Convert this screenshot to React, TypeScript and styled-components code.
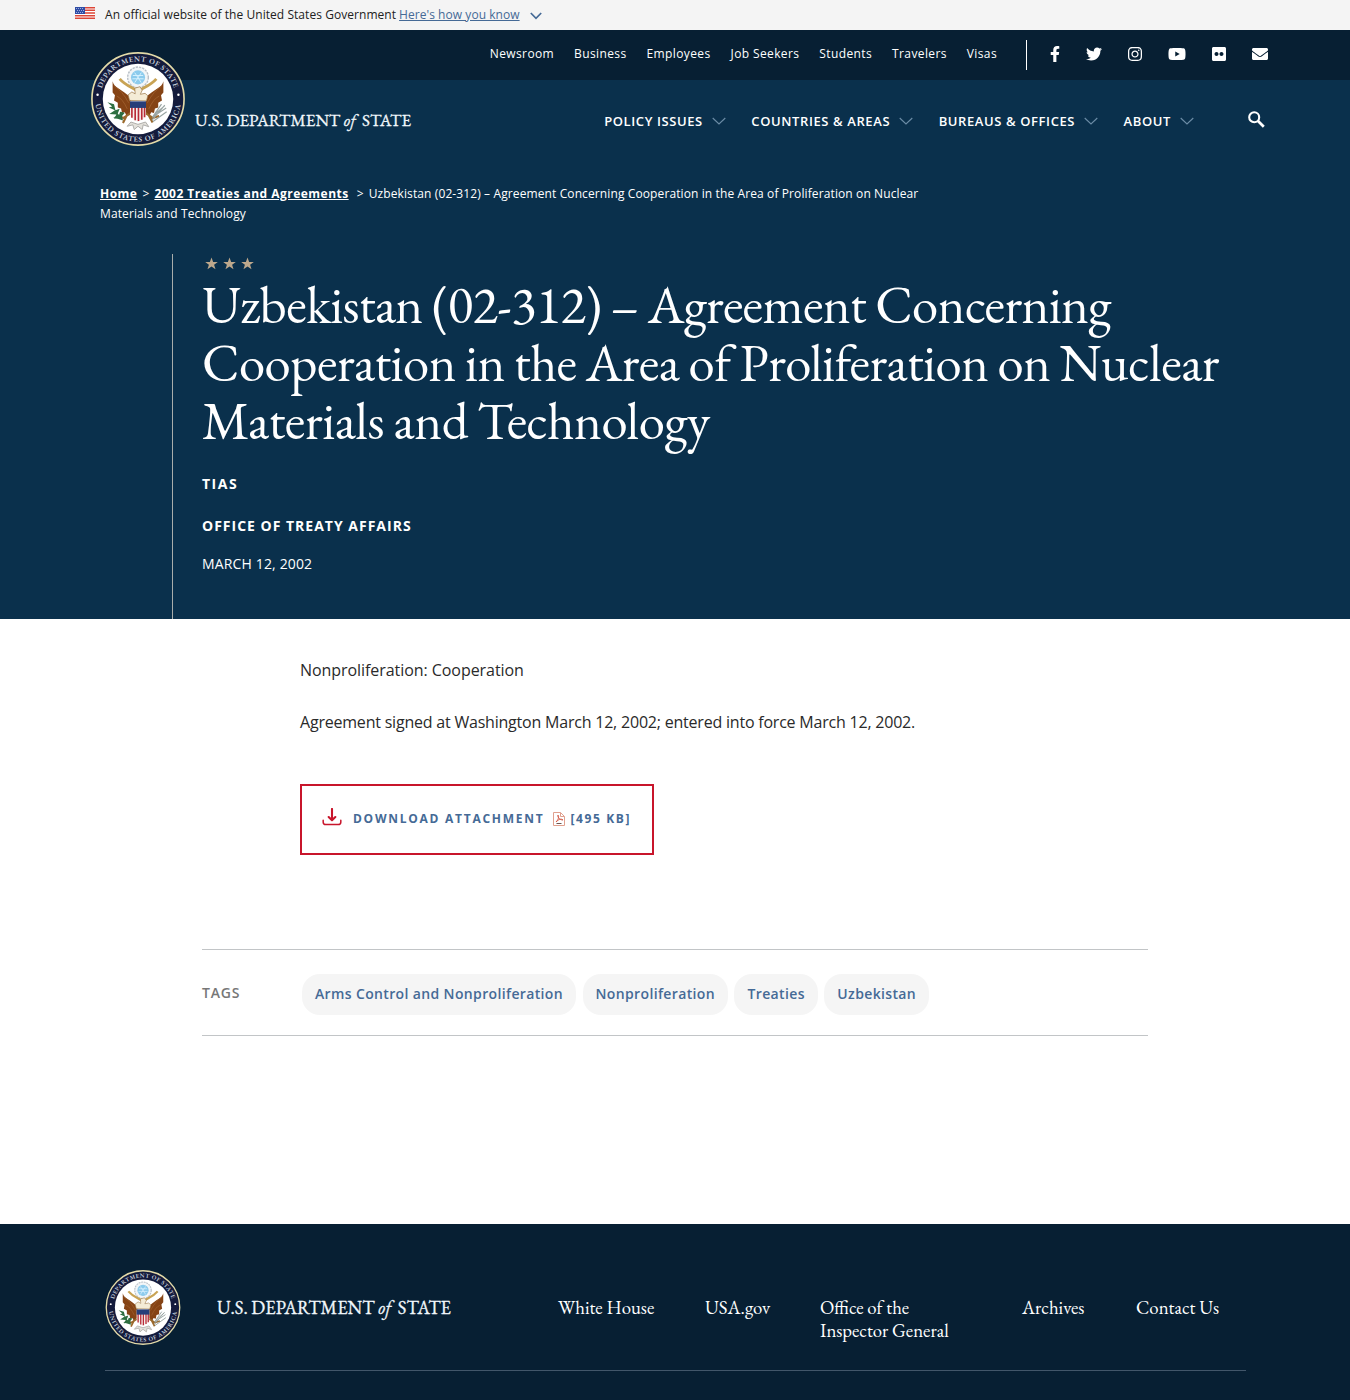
import React, { useId } from "react";
import styled, { createGlobalStyle } from "styled-components";
import { FaFacebookF, FaTwitter, FaInstagram, FaYoutube, FaFlickr, FaEnvelope } from "react-icons/fa";

const sans = `"Open Sans", "Noto Sans", sans-serif`;
const serif = `"EB Garamond", "Liberation Serif", serif`;
const navy = "#0a304c";
const deepNavy = "#071f33";
const link = "#456a96";

const GlobalStyle = createGlobalStyle`
  *, *::before, *::after { box-sizing: border-box; }
  body { margin: 0; background: #fff; font-family: ${sans}; color: #323a45; }
  a { color: inherit; text-decoration: none; }
  h1, p { margin: 0; }
`;

const Page = styled.div`
  width: 1350px;
  height: 1400px;
  overflow: hidden;
  display: flex;
  flex-direction: column;
`;

const GovBanner = styled.div`
  display: flex;
  align-items: center;
  flex: none;
  height: 30px;
  padding: 0 75px;
  background: #f4f4f4;
  font-size: 12px;
  line-height: 18px;
  letter-spacing: 0.05px;
  color: #212121;
`;
const FlagIcon = styled.svg`
  width: 20px;
  height: 12px;
  margin: 0 10px 4px 0;
`;
const BannerLink = styled.a`
  margin-left: 3px;
  color: ${link};
  text-decoration: underline;
`;
const BannerChevron = styled.svg`
  width: 12px;
  height: 8px;
  margin: 2px 0 0 10px;
`;

const TopBar = styled.div`
  display: flex;
  flex: none;
  align-items: flex-start;
  justify-content: flex-end;
  height: 50px;
  padding: 10px 82px 0 0;
  background: ${deepNavy};
  color: #fff;
`;
const TopLinks = styled.nav`
  display: flex;
  gap: 20px;
  padding-right: 29px;
  height: 30px;
  border-right: 1px solid #fff;
  font-size: 12px;
  line-height: 27px;
  letter-spacing: 0.38px;
`;
const Socials = styled.div`
  display: flex;
  align-items: center;
  gap: 26px;
  height: 28px;
  margin-left: 23px;
`;
const SocialLink = styled.a<{ $width: number }>`
  display: flex;
  width: ${(p) => p.$width}px;
  height: 16px;
  svg { width: 100%; height: 100%; }
`;

const Hero = styled.div`
  flex: none;
  height: 539px;
  background: ${navy};
  color: #fff;
`;
const MainBar = styled.div`
  display: flex;
  align-items: flex-start;
  height: 104px;
  padding: 0 82px 0 91px;
`;
const HeaderSeal = styled.div`
  position: relative;
  width: 94px;
  height: 94px;
  margin-top: -28px;
`;
const Wordmark = styled.div<{ $size: number }>`
  font-family: ${serif};
  font-size: ${(p) => p.$size}px;
  line-height: 24px;
  font-weight: 400;
  color: #f2f8fc;
  white-space: nowrap;
  -webkit-text-stroke: 0.3px currentColor;
  em { margin-right: 3px; }
`;
const HeaderWordmark = styled.div`
  margin: 28px 0 0 10px;
`;
const MainLinks = styled.nav`
  display: flex;
  gap: 25.5px;
  margin: 31px 0 0 auto;
`;
const MainLink = styled.a`
  display: flex;
  align-items: center;
  gap: 9px;
  font-size: 13px;
  line-height: 20px;
  font-weight: 600;
  letter-spacing: 0.6px;
`;
const NavChevron = styled.svg`
  width: 14px;
  height: 8px;
`;
const SearchButton = styled.button`
  display: flex;
  margin: 31px 3px 0 54px;
  padding: 0;
  border: 0;
  background: none;
  color: #fff;
`;

const Breadcrumbs = styled.div`
  width: 830px;
  margin-left: 100px;
  font-size: 12px;
  line-height: 20px;
  letter-spacing: 0.11px;
  white-space: nowrap;
`;
const Crumb = styled.a`
  font-weight: 700;
  text-decoration: underline;
  letter-spacing: 0.48px;
`;
const CrumbMark = styled.span<{ $left: number }>`
  margin: 0 5px 0 ${(p) => p.$left}px;
`;
const TitleBlock = styled.div`
  height: 365px;
  margin: 30px 0 0 172px;
  padding-left: 29px;
  border-left: 1px solid #a9adab;
`;
const Stars = styled.div`
  display: flex;
  gap: 5px;
  height: 18px;
  padding: 3px 0 0 2.5px;
`;
const Title = styled.h1`
  padding: 4px 0 1px;
  font-family: ${serif};
  font-size: 52.8px;
  line-height: 58px;
  font-weight: 400;
  word-spacing: -0.8px;
`;
const TitleLine = styled.span<{ $spacing: number }>`
  display: block;
  letter-spacing: ${(p) => p.$spacing}px;
  white-space: nowrap;
`;
const MetaLabel = styled.p<{ $top: number; $spacing: number }>`
  margin-top: ${(p) => p.$top}px;
  font-size: 14px;
  line-height: 20px;
  font-weight: 700;
  letter-spacing: ${(p) => p.$spacing}px;
`;
const MetaDate = styled.p`
  margin-top: 18px;
  font-size: 14px;
  line-height: 20px;
  letter-spacing: 0.15px;
`;

const Content = styled.main`
  flex: none;
  height: 605px;
  padding: 38px 202px 0;
`;
const Body = styled.div`
  padding-left: 98px;
`;
const Paragraph = styled.p<{ $spacing: number }>`
  font-size: 16px;
  line-height: 26px;
  letter-spacing: ${(p) => p.$spacing}px;
  color: #2a2a2a;
  & + & { margin-top: 26px; }
`;
const Download = styled.a`
  display: flex;
  width: 354px;
  height: 71px;
  margin-top: 49px;
  padding: 20px 0 0 20px;
  border: 2px solid #c8152b;
  color: ${link};
  font-size: 12px;
  line-height: 26px;
  font-weight: 700;
  letter-spacing: 1.74px;
`;
const DownloadIcon = styled.svg`
  width: 20px;
  height: 18px;
  margin: 2px 11px 0 0;
`;
const PdfIcon = styled.svg`
  width: 12px;
  height: 14px;
  margin: 6px 6px 0 8px;
`;
const Size = styled.span`
  letter-spacing: 1.6px;
`;
const TagRow = styled.section`
  display: flex;
  align-items: flex-start;
  width: 946px;
  height: 87px;
  margin-top: 94px;
  border: solid #c2c5c7;
  border-width: 1px 0;
`;
const TagLabel = styled.div`
  width: 100px;
  padding-top: 33px;
  font-size: 14px;
  line-height: 20px;
  font-weight: 600;
  letter-spacing: 0.8px;
  color: #777;
`;
const Tags = styled.div`
  display: flex;
  gap: 6.5px;
  margin-top: 24px;
`;
const Tag = styled.a`
  height: 41px;
  padding: 0 13px;
  border-radius: 18px;
  background: #f5f5f5;
  color: ${link};
  font-size: 14px;
  line-height: 40px;
  font-weight: 600;
  letter-spacing: 0.36px;
  white-space: nowrap;
`;

const Footer = styled.footer`
  flex: 1;
  padding: 46px 104px 0 105px;
  background: ${deepNavy};
  color: #fff;
`;
const FooterRow = styled.div`
  display: flex;
  align-items: flex-start;
  height: 101px;
  border-bottom: 1px solid #42566a;
`;
const FooterSeal = styled.div`
  width: 76px;
  height: 75px;
`;
const FooterWordmark = styled.div`
  width: 341px;
  padding: 25px 0 0 36px;
`;
const FooterLinks = styled.nav`
  display: grid;
  grid-template-columns: 147px 115px 202px 114px 100px;
  padding: 26px 0 0 36px;
  font-family: ${serif};
  font-size: 18.8px;
  line-height: 23px;
  a { white-space: pre-line; }
`;

const SealSvg = styled.svg`
  display: block;
  width: 100%;
  height: 100%;
`;

function Seal() {
  const id = useId();
  return (
    <SealSvg viewBox="0 0 200 200">
      <defs>
        <path id={id + "t"} d="M20 100A80 80 0 0 1 180 100" />
        <path id={id + "b"} d="M9 100A91 91 0 0 0 191 100" />
      </defs>
      <circle cx="100" cy="100" r="98" fill="#141b3c" stroke="#e3daa8" strokeWidth="3.5" />
      <circle cx="100" cy="100" r="75" fill="#fff" />
      <g fill="#c9d2de" fontFamily={serif} fontSize="16" fontWeight="600">
        <text textAnchor="middle" letterSpacing="1.1">
          <textPath href={"#" + id + "t"} startOffset="50%">DEPARTMENT OF STATE</textPath>
        </text>
        <text textAnchor="middle" letterSpacing="1.6">
          <textPath href={"#" + id + "b"} startOffset="50%">UNITED STATES OF AMERICA</textPath>
        </text>
      </g>
      <circle cx="14" cy="91" r="2.6" fill="#fff" />
      <circle cx="186" cy="91" r="2.6" fill="#fff" />
      <circle cx="100" cy="54" r="22" fill="#f2f5f7" stroke="#b9c0c8" strokeWidth="3" strokeDasharray="5 2" />
      <circle cx="100" cy="54" r="15" fill="#8ccbed" />
      <path d="M89 50h22M88 57h24M93 44l14 21M107 44L93 65" stroke="#d9f2ff" strokeWidth="2" />
      <path d="M61 57C72 70 85 74 96 81M139 57C128 70 115 74 104 81" fill="none" stroke="#c8a354" strokeWidth="6" />
      <path d="M46 62C49 77 64 76 85 98L87 124L76 137L72 128L66 130L64 120L57 118L57 108L49 103L51 92L46 86Z" fill="#854315" />
      <path d="M154 62C151 77 136 76 115 98L113 124L124 137L128 128L134 130L136 120L143 118L143 108L151 103L149 92L154 86Z" fill="#854315" />
      <path d="M50 73Q66 82 80 108M55 94Q67 99 77 121M150 73Q134 82 120 108M145 94Q133 99 123 121" fill="none" stroke="#9c5d2c" strokeWidth="2" />
      <path d="M82 103L79 91L87 85L94 89L93 77L104 74L109 81L105 90L115 88L121 93L118 104Z" fill="#f4ecd7" stroke="#9b7849" strokeWidth="1.5" />
      <path d="M88 128L69 140L55 137M112 128L132 140L145 136M76 135L68 151M123 135L131 150" fill="none" stroke="#9b692c" strokeWidth="4.5" />
      <path d="M85 149L77 158L89 155L92 165L100 158L109 165L111 155L123 159L116 149L100 154Z" fill="#e3e1db" stroke="#aaa9a5" strokeWidth="2" />
      <path d="M83 105H117V130Q117 143 100 149Q83 143 83 130Z" fill="#f6f2ee" />
      <path d="M87 116V140M94 116V145M101 116V147M108 116V144M114 116V139" stroke="#b92b38" strokeWidth="3.5" />
      <path d="M83 105H117V119H83Z" fill="#273e79" />
      <g fill="#2d6e40">
        <path d="M35 107L45 116L38 118L51 124L39 132L54 133L49 142L65 140L57 131L61 121L52 124L49 111Z" />
        <path d="M47 139L68 146L66 136L72 129L62 127L59 136Z" />
      </g>
      <path d="M130 145L157 113M130 139L160 119M132 148L161 127M132 137L150 111M135 133L157 114" stroke="#9aa5a3" strokeWidth="2.5" />
    </SealSvg>
  );
}

function Star() {
  return (
    <svg width="13" height="13" viewBox="0 0 12 12">
      <path d="M6 .4L7.5 4.5H11.8L8.4 7.1L9.7 11.3L6 8.8L2.3 11.3L3.6 7.1L.2 4.5H4.5Z" fill="#bda88c" />
    </svg>
  );
}

const topLinks = ["Newsroom", "Business", "Employees", "Job Seekers", "Students", "Travelers", "Visas"];
const socials = [
  { Icon: FaFacebookF, width: 10, label: "Facebook" },
  { Icon: FaTwitter, width: 16, label: "Twitter" },
  { Icon: FaInstagram, width: 14, label: "Instagram" },
  { Icon: FaYoutube, width: 18, label: "YouTube" },
  { Icon: FaFlickr, width: 14, label: "Flickr" },
  { Icon: FaEnvelope, width: 16, label: "Email" },
];
const mainLinks = ["POLICY ISSUES", "COUNTRIES & AREAS", "BUREAUS & OFFICES", "ABOUT"];
const tags = ["Arms Control and Nonproliferation", "Nonproliferation", "Treaties", "Uzbekistan"];
const footerLinks = ["White House", "USA.gov", "Office of the\nInspector General", "Archives", "Contact Us"];

export default function App() {
  return (
    <Page>
      <GlobalStyle />
      <GovBanner>
        <FlagIcon viewBox="0 0 20 12">
          <path fill="#fff" d="M0 0h20v12H0z" />
          <path d="M0 .7h20M0 3.3h20M0 6h20M0 8.7h20M0 11.3h20" stroke="#dc4536" strokeWidth="1.4" />
          <path fill="#304da5" d="M0 0h10v7H0z" />
          <path d="M1 1.5h8M2 3.5h7M1 5.5h8" stroke="#b8c4e8" strokeWidth=".8" strokeDasharray="1 1" />
        </FlagIcon>
        An official website of the United States Government
        <BannerLink href="#">Here's how you know</BannerLink>
        <BannerChevron viewBox="0 0 12 8"><path d="M.8 1L6 6.3L11.2 1" fill="none" stroke={link} strokeWidth="1.7" /></BannerChevron>
      </GovBanner>

      <TopBar>
        <TopLinks>{topLinks.map((t) => <a href="#" key={t}>{t}</a>)}</TopLinks>
        <Socials>
          {socials.map(({ Icon, width, label }) => (
            <SocialLink href="#" key={label} $width={width} aria-label={label}><Icon /></SocialLink>
          ))}
        </Socials>
      </TopBar>

      <Hero>
        <MainBar>
          <HeaderSeal><Seal /></HeaderSeal>
          <HeaderWordmark>
            <Wordmark $size={17}>U.S. DEPARTMENT <em>of</em> STATE</Wordmark>
          </HeaderWordmark>
          <MainLinks>
            {mainLinks.map((t) => (
              <MainLink href="#" key={t}>
                {t}
                <NavChevron viewBox="0 0 14 8"><path d="M.7 1L7 7L13.3 1" fill="none" stroke="#6c8ca6" strokeWidth="1.1" /></NavChevron>
              </MainLink>
            ))}
          </MainLinks>
          <SearchButton aria-label="Search">
            <svg width="17" height="17" viewBox="0 0 17 17" fill="none" stroke="currentColor">
              <circle cx="6.2" cy="6.2" r="5" strokeWidth="2.1" />
              <path d="M10 10L15.8 15.8" strokeWidth="2.7" />
            </svg>
          </SearchButton>
        </MainBar>
        <Breadcrumbs>
          <Crumb href="#">Home</Crumb>
          <CrumbMark $left={5}>&gt;</CrumbMark>
          <Crumb href="#">2002 Treaties and Agreements</Crumb>
          <CrumbMark $left={8}>&gt;</CrumbMark>
          <span>Uzbekistan (02-312) – Agreement Concerning Cooperation in the Area of Proliferation on Nuclear</span>
          <br />
          <span>Materials and Technology</span>
        </Breadcrumbs>
        <TitleBlock>
          <Stars><Star /><Star /><Star /></Stars>
          <Title>
            <TitleLine $spacing={-0.63}>Uzbekistan (02-312) – Agreement Concerning</TitleLine>
            <TitleLine $spacing={-0.56}>Cooperation in the Area of Proliferation on Nuclear</TitleLine>
            <TitleLine $spacing={-0.43}>Materials and Technology</TitleLine>
          </Title>
          <MetaLabel $top={23} $spacing={1.5}>TIAS</MetaLabel>
          <MetaLabel $top={22} $spacing={1}>OFFICE OF TREATY AFFAIRS</MetaLabel>
          <MetaDate>MARCH 12, 2002</MetaDate>
        </TitleBlock>
      </Hero>

      <Content>
        <Body>
          <Paragraph $spacing={-0.06}>Nonproliferation: Cooperation</Paragraph>
          <Paragraph $spacing={-0.21}>Agreement signed at Washington March 12, 2002; entered into force March 12, 2002.</Paragraph>
          <Download href="#">
            <DownloadIcon viewBox="0 0 21 19" fill="none" stroke="#c8152b" strokeWidth="1.8" strokeLinecap="round" strokeLinejoin="round">
              <path d="M10.5 1V13M7 9.5L10.5 13L14 9.5" strokeWidth="2.2" />
              <path d="M1.2 13V15Q1.2 17.5 4 17.5H17Q19.8 17.5 19.8 15V13" strokeWidth="1.6" />
            </DownloadIcon>
            DOWNLOAD ATTACHMENT
            <PdfIcon viewBox="0 0 12 14" fill="none">
              <path d="M.5.5H7.5L11.5 4.5V13.5H.5ZM7.5.5V4.5H11.5" stroke="#e0a08e" />
              <path d="M3 10C6 7 6 4 5 3C4 4 6 8 10 8C8 6 5 8 3 10Z" stroke="#d0543f" strokeWidth=".9" />
              <path d="M3.5 11.5H8.5" stroke="#6b5652" />
            </PdfIcon>
            <Size>[495 KB]</Size>
          </Download>
        </Body>
        <TagRow>
          <TagLabel>TAGS</TagLabel>
          <Tags>{tags.map((t) => <Tag href="#" key={t}>{t}</Tag>)}</Tags>
        </TagRow>
      </Content>

      <Footer>
        <FooterRow>
          <FooterSeal><Seal /></FooterSeal>
          <FooterWordmark>
            <Wordmark $size={18.45}>U.S. DEPARTMENT <em>of</em> STATE</Wordmark>
          </FooterWordmark>
          <FooterLinks>{footerLinks.map((t) => <a href="#" key={t}>{t}</a>)}</FooterLinks>
        </FooterRow>
      </Footer>
    </Page>
  );
}
